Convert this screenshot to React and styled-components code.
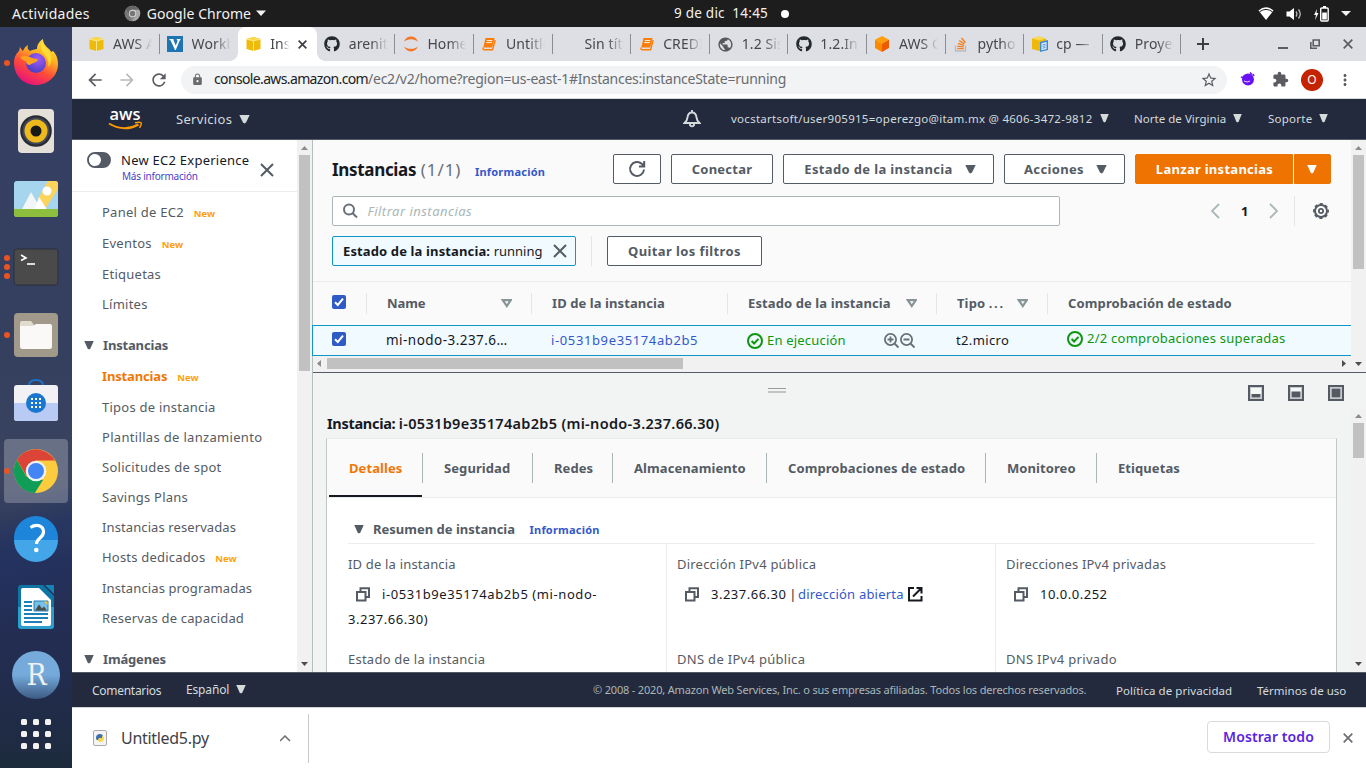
import React from "react";
import styled, { createGlobalStyle, css } from "styled-components";
import { MdArrowBack, MdArrowForward, MdRefresh, MdLock, MdStarBorder, MdExtension, MdPublic, MdMoreVert } from "react-icons/md";
import { FaGithub } from "react-icons/fa";

const Global = createGlobalStyle`
  * { box-sizing: border-box; }
  body { margin: 0; overflow: hidden; background: #fff; font-family: "Noto Sans", "Open Sans", sans-serif; }
  svg { display: block; flex: none; }
`;

const ORANGE = "#f07706";
const BLUE = "#3457cb";
const GREEN = "#0f960f";

const Txt = styled.span`
  font-size: ${(p) => p.$s || 13}px;
  font-weight: ${(p) => p.$b || 400};
  color: ${(p) => p.$c || "inherit"};
  letter-spacing: ${(p) => p.$ls || 0}px;
  margin-left: ${(p) => p.$ml || 0}px;
  margin-top: ${(p) => p.$mt || 0}px;
  white-space: nowrap;
  line-height: 1.2;
`;

const Screen = styled.div`
  width: 1366px;
  height: 768px;
  display: flex;
  flex-direction: column;
  overflow: hidden;
`;

/* ---------- GNOME top bar ---------- */
const TopBar = styled.header`
  height: 27px;
  background: #1d1d1d;
  color: #f2f2f2;
  display: grid;
  grid-template-columns: 674px 1fr auto;
  align-items: center;
`;
const TopGroup = styled.div`
  display: flex;
  align-items: center;
  padding-left: ${(p) => p.$pl || 0}px;
  padding-right: ${(p) => p.$pr || 0}px;
  gap: ${(p) => p.$gap || 0}px;
`;
const Dot = styled.i`
  width: ${(p) => p.$d || 8}px;
  height: ${(p) => p.$d || 8}px;
  border-radius: 50%;
  background: ${(p) => p.$c || "#fff"};
`;
const Body = styled.div`
  flex: 1;
  display: flex;
  min-height: 0;
`;

/* ---------- Dock ---------- */
const DockBar = styled.nav`
  width: 72px;
  padding-top: 2px;
  background:
    linear-gradient(152deg, transparent 63%, rgba(32, 52, 100, 0.55) 68%, transparent 78%),
    linear-gradient(180deg, #353f64 0%, #35405f 45%, #3a4460 62%, #26305a 72%, #222c4e 88%, #1d2b3d 100%);
  display: flex;
  flex-direction: column;
`;
const DockCell = styled.div`
  height: 68px;
  padding: 2px 4px;
`;
const DockInner = styled.div`
  height: 64px;
  border-radius: 4px;
  display: flex;
  align-items: center;
  background: ${(p) => (p.$on ? "rgba(255,255,255,.24)" : "transparent")};
`;
const Marks = styled.div`
  width: 8px;
  display: flex;
  flex-direction: column;
  gap: 3px;
`;
const GridCell = styled.div`
  height: 58px;
  padding: 9px 0 0 20px;
`;

/* ---------- Chrome ---------- */
const Browser = styled.main`
  width: 1294px;
  display: flex;
  flex-direction: column;
`;
const TabStrip = styled.div`
  height: 34px;
  background: #dedfe4;
  padding-left: 9px;
  display: flex;
  color: #45474b;
`;
const flare = css`
  &::before {
    content: "";
    position: absolute;
    left: -8px;
    right: -8px;
    bottom: 0;
    height: 8px;
    background:
      radial-gradient(circle at 0 0, transparent 7.5px, #fff 8px) left / 8px 8px no-repeat,
      radial-gradient(circle at 100% 0, transparent 7.5px, #fff 8px) right / 8px 8px no-repeat;
  }
`;
const TabBox = styled.div`
  width: 78.6px;
  flex: none;
  height: 34px;
  padding-left: 7.5px;
  display: flex;
  align-items: center;
  position: relative;
  background: ${(p) => (p.$active ? "#fff" : "transparent")};
  border-radius: 8px 8px 0 0;
  ${(p) => p.$active && flare}
  &::after {
    content: "";
    position: absolute;
    right: 0;
    top: 7px;
    width: 1px;
    height: 20px;
    background: ${(p) => (p.$line ? "#8a8c91" : "transparent")};
  }
`;
const TabIcon = styled.div`
  width: 24.5px;
  display: flex;
`;
const TabLabel = styled.div`
  width: ${(p) => p.$w || 40}px;
  overflow: hidden;
  font-size: 14px;
  line-height: 20px;
  white-space: nowrap;
  letter-spacing: 0.1px;
  mask-image: linear-gradient(90deg, #000 55%, transparent 98%);
`;
const WindowButtons = styled.div`
  display: flex;
  align-items: center;
  color: #5b5d62;
  margin-left: ${(p) => (p.$first ? "16px" : "auto")};
  padding-right: ${(p) => (p.$first ? 0 : 13)}px;
`;
const Toolbar = styled.div`
  height: 38px;
  background: #fff;
  border-bottom: 1px solid #d5dbdb;
  display: flex;
  align-items: center;
  padding-left: 12.5px;
`;
const NavButton = styled.div`
  width: 32px;
  display: flex;
  color: ${(p) => p.$c || "#5a5c61"};
`;
const Omnibox = styled.div`
  width: 1046px;
  height: 28px;
  border-radius: 14px;
  background: #f1f3f4;
  display: flex;
  align-items: center;
  padding: 0 9px 0 10.5px;
  color: #6a6c70;
`;
const Grow = styled.div`
  flex: 1;
`;
const Extensions = styled.div`
  display: flex;
  align-items: center;
  padding-left: 13px;
  color: #5a5c61;
`;
const Avatar = styled.div`
  width: 22px;
  height: 22px;
  margin: 0 12.5px 0 12.5px;
  border-radius: 50%;
  background: #c52200;
  color: #fff;
  font-size: 12px;
  display: grid;
  place-items: center;
`;

/* ---------- AWS header/footer ---------- */
const AwsHeader = styled.div`
  height: 41px;
  background: #232a3e;
  border-bottom: 1px solid #545b64;
  color: #d5dbdb;
  display: flex;
  align-items: center;
  padding-left: 36px;
`;
const HeadItem = styled.div`
  width: ${(p) => p.$w}px;
  flex: none;
  display: flex;
  align-items: center;
  gap: ${(p) => p.$gap || 7}px;
`;
const Footer = styled.div`
  height: 36px;
  background: #232a3e;
  border-top: 1px solid #545b64;
  border-bottom: 1px solid #cfd3d8;
  color: #d5dbdb;
  display: flex;
  align-items: center;
  padding-left: 20px;
`;
const Downloads = styled.div`
  flex: 1;
  background: #fff;
  display: flex;
  align-items: center;
  padding: 0 13px 0 21px;
  color: #3f4144;
`;
const DownloadItem = styled.div`
  width: 216px;
  height: 49px;
  border-right: 1px solid #c8c8c8;
  display: flex;
  align-items: center;
`;
const ShowAll = styled.button`
  width: 123px;
  height: 32px;
  margin: 0 13px 2px auto;
  padding: 0 0 2px;
  background: #fff;
  border: 1px solid #d9dade;
  border-radius: 4px;
  color: #5a1fe0;
  font: 600 14px "Noto Sans", sans-serif;
  letter-spacing: 0.1px;
`;

/* ---------- Console ---------- */
const Console = styled.div`
  height: 532px;
  display: flex;
`;
const Side = styled.aside`
  width: 225px;
  background: #fff;
  color: #545b64;
  overflow: hidden;
`;
const SideTop = styled.div`
  height: 52px;
  border-bottom: 1px solid #eaeded;
  display: flex;
  align-items: flex-start;
  padding: 12px 0 0 15px;
  margin-bottom: 5px;
`;
const Toggle = styled.div`
  width: 24px;
  height: 16px;
  flex: none;
  border-radius: 8px;
  border: 2px solid #545b64;
  background: linear-gradient(90deg, #fff 0 6px, #545b64 6px);
  &::before {
    content: "";
    display: block;
    width: 12px;
    height: 12px;
    border-radius: 50%;
    background: #fff;
  }
`;
const SideTitle = styled.div`
  width: 152px;
  flex: none;
  padding-left: 10px;
  display: flex;
  flex-direction: column;
`;
const SideItem = styled.div`
  height: ${(p) => (p.$new ? 31 : 30)}px;
  padding-left: 30px;
  display: flex;
  align-items: center;
  gap: 10px;
`;
const SideHead = styled.div`
  height: 32px;
  margin-top: 10px;
  padding-left: 12px;
  display: flex;
  align-items: center;
  gap: 8px;
`;
const VScroll = styled.div`
  width: 15px;
  background: #f1f1f1;
  display: flex;
  flex-direction: column;
  align-items: center;
  justify-content: space-between;
  padding: ${(p) => p.$pt || 5}px 0 5px;
`;
const VThumb = styled.div`
  width: 11px;
  height: ${(p) => p.$h}px;
  margin-top: 3px;
  margin-bottom: auto;
  background: #c1c1c1;
`;
const Main = styled.section`
  flex: 1;
  border-left: 1px solid #b3bec0;
  display: flex;
  flex-direction: column;
  min-width: 0;
`;
const ListPane = styled.div`
  height: 233px;
  background: #fafafa;
  border-bottom: 1px solid #545b64;
  display: flex;
`;
const ListBody = styled.div`
  width: 1038px;
`;
const Row = styled.div`
  height: ${(p) => p.$h}px;
  display: flex;
  align-items: center;
  padding-left: 19px;
`;
const ListTop = styled.div`
  height: 142px;
  padding-top: 14px;
  border-bottom: 1px solid #eaeded;
`;
const Button = styled.button`
  width: ${(p) => p.$w}px;
  height: 30px;
  margin-right: ${(p) => (p.$mr === undefined ? 10 : p.$mr)}px;
  padding: 0;
  background: #fff;
  border: 1px solid #545b64;
  border-radius: 2px;
  color: #545b64;
  display: flex;
  align-items: center;
  justify-content: center;
  gap: 12px;
  font-family: inherit;
`;
const Primary = styled(Button)`
  background: #ee7300;
  border-color: #ee7300;
  border-radius: ${(p) => (p.$end ? "0 2px 2px 0" : "2px 0 0 2px")};
  color: #fff;
`;
const Search = styled.div`
  width: 728px;
  height: 30px;
  background: #fff;
  border: 1px solid #aab7b8;
  border-radius: 2px;
  display: flex;
  align-items: center;
  padding-left: 10px;
  font-style: italic;
`;
const Pager = styled.div`
  width: 85px;
  height: 30px;
  margin-left: 150px;
  border-right: 1px solid #e3e7e7;
  display: flex;
  align-items: center;
  color: #aab7b8;
`;
const Tag = styled.div`
  width: 244px;
  height: 30px;
  background: #f1faff;
  border: 1px solid #0f97c7;
  border-radius: 2px;
  color: #16191f;
  display: flex;
  align-items: center;
  padding-left: 10px;
`;
const VLine = styled.i`
  width: 1px;
  height: 30px;
  background: #e3e7e7;
  margin: 0 15px;
`;
const Cells = styled.div`
  height: ${(p) => (p.$sel ? 31 : 43)}px;
  background: ${(p) => (p.$sel ? "#f1faff" : "transparent")};
  border: solid #0f97c7;
  border-width: ${(p) => (p.$sel ? "1px 0" : "0")};
  box-shadow: ${(p) => (p.$sel ? "-1px 0 #0f97c7" : "none")};
  color: ${(p) => (p.$sel ? "#16191f" : "#545b64")};
  display: grid;
  grid-template-columns: 54px 165px 196px 209px 111px 1fr;
  align-items: center;
`;
const Cell = styled.div`
  height: ${(p) => (p.$head ? 21 : 29)}px;
  border-right: 1px solid ${(p) => (p.$head && !p.$last ? "#e3e7e7" : "transparent")};
  padding-left: ${(p) => (p.$pl === undefined ? 20 : p.$pl)}px;
  display: flex;
  align-items: center;
`;
const SortSlot = styled.div`
  margin-left: auto;
  padding-right: ${(p) => p.$r || 19}px;
`;
const Checkbox = styled.div`
  width: 14px;
  height: 14px;
  border-radius: 2px;
  background: #2f5bc4;
  display: grid;
  place-items: center;
  margin-top: ${(p) => p.$mt || 0}px;
`;
const HScroll = styled.div`
  height: 16px;
  background: #f1f1f1;
  display: flex;
  align-items: center;
  justify-content: space-between;
  padding: 0 4px 1px 3px;
`;
const HThumb = styled.div`
  width: 356px;
  height: 11px;
  margin: 0 auto 0 4px;
  background: #c1c1c1;
`;
const Detail = styled.div`
  flex: 1;
  min-height: 0;
  background: #f2f3f3;
  display: flex;
  flex-direction: column;
  overflow: hidden;
`;
const DetailTools = styled.div`
  height: 36px;
  display: flex;
  align-items: center;
  padding: 4px 22px 0 455px;
`;
const Handle = styled.div`
  width: 18px;
  height: 5px;
  margin: 0 462px 5px 0;
  border-top: 1px solid #979b9b;
  border-bottom: 2px solid #c0c4c4;
`;
const DetailScroll = styled.div`
  flex: 1;
  display: flex;
  min-height: 0;
`;
const DetailBody = styled.div`
  width: 1038px;
  padding-left: 13px;
  overflow: hidden;
`;
const TitleRow = styled.div`
  height: 29px;
  color: #16191f;
  display: flex;
  align-items: center;
`;
const Card = styled.div`
  width: 1011px;
  height: 300px;
  background: #fff;
  border: 1px solid #c0c5c6;
  border-top-color: #eaeded;
`;
const Tabs = styled.div`
  height: 59px;
  background: #fafafa;
  border-bottom: 1px solid #eaeded;
  display: flex;
  padding-left: 2px;
`;
const DTab = styled.div`
  width: ${(p) => p.$w}px;
  height: 58px;
  display: flex;
  align-items: center;
  position: relative;
  padding-left: ${(p) => (p.$on ? 20 : 22)}px;
  border-bottom: 2px solid ${(p) => (p.$on ? "#16191f" : "transparent")};
  color: ${(p) => (p.$on ? ORANGE : "#545b64")};
  &::after {
    content: "";
    position: absolute;
    right: -1px;
    top: 14px;
    width: 1px;
    height: 30px;
    background: ${(p) => (p.$last ? "transparent" : "#aab7b8")};
  }
`;
const Section = styled.div`
  margin: 0 21px;
  padding-top: 17px;
`;
const SectionHead = styled.div`
  height: 29px;
  padding-left: 6px;
  border-bottom: 1px solid #eaeded;
  display: flex;
  align-items: center;
  color: #545b64;
`;
const Columns = styled.div`
  display: grid;
  grid-template-columns: 319px 329px 1fr;
`;
const Column = styled.div`
  height: 240px;
  padding: 11px 10px 0 ${(p) => (p.$first ? 0 : 10)}px;
  border-right: 1px solid ${(p) => (p.$last ? "transparent" : "#eaeded")};
`;
const Label = styled.div`
  height: 20px;
  color: #545b64;
  display: flex;
  align-items: center;
`;
const Value = styled.div`
  height: 25px;
  margin-top: ${(p) => (p.$next ? 0 : 7)}px;
  margin-bottom: ${(p) => p.$mb || 0}px;
  padding-left: ${(p) => (p.$next ? 0 : 8)}px;
  color: #16191f;
  display: flex;
  align-items: center;
`;
const Pair = styled.div`
  display: flex;
`;

/* ---------- glyphs ---------- */
const Tri = ({ c = "currentColor", w = 11, h = 9 }) => (
  <svg width={w} height={h} viewBox="0 0 11 9" preserveAspectRatio="none"><path d="M.3 0h10.400L7 7.500 5.500 8.500 4 7.500z" fill={c} /></svg>
);
const Sort = () => (
  <svg width="11" height="9" viewBox="0 0 11 9"><path d="M1.800 1.100h8L5.800 7z" fill="none" stroke="#879596" strokeWidth="2.200" /></svg>
);
const Cross = ({ s = 14, w = 2, c = "#545b64" }) => (
  <svg width={s} height={s} viewBox="0 0 14 14"><path d="M1 1l12 12M13 1L1 13" stroke={c} strokeWidth={w} fill="none" /></svg>
);
const Arrow = ({ d, c = "#4d4d4d" }) => (
  <svg width="7" height="7" viewBox="0 0 7 7">
    <path fill={c} d={{ up: "M0 5h7L3.5 1z", down: "M0 2h7L3.5 6z", left: "M5 0v7L1 3.5z", right: "M2 0v7l4-3.5z" }[d]} />
  </svg>
);
const CheckMark = () => (
  <svg width="12" height="12" viewBox="0 0 12 12"><path d="M2 6.2l2.8 2.8L10 2.6" stroke="#fff" strokeWidth="2" fill="none" /></svg>
);
const Ok = () => (
  <svg width="16" height="16" viewBox="0 0 16 16" fill="none" stroke={GREEN} strokeWidth="2">
    <circle cx="8" cy="8" r="7" /><path d="M4.6 8l2.5 2.5 4.4-4.6" />
  </svg>
);
const Mag = ({ plus }) => (
  <svg width="16" height="16" viewBox="0 0 16 16" fill="none" stroke="#687078" strokeWidth="1.8">
    <circle cx="6.500" cy="6.500" r="5.600" /><path d={plus ? "M3.500 6.500h6M6.500 3.500v6M10.500 10.500l4 4" : "M3.500 6.500h6M10.500 10.500l4 4"} />
  </svg>
);
const MagPair = () => <Pair><Mag plus /><Mag /></Pair>;
const Copy = () => (
  <svg width="15" height="15" viewBox="0 0 15 15" fill="none" stroke="#545b64" strokeWidth="2">
    <path d="M1 5h8.500v8.500H1zM4.500 5V1.200H13V10H9.500" />
  </svg>
);
const Chevron = ({ dir }) => (
  <svg width="10" height="16" viewBox="0 0 10 16"><path d={dir === "l" ? "M9 1L2 8l7 7" : "M1 1l7 7-7 7"} fill="none" stroke="#aab7b8" strokeWidth="1.8" /></svg>
);
const PanelIcon = ({ top, left = 3.5 }) => (
  <svg width="16" height="16" viewBox="0 0 16 16">
    <rect x="1" y="1" width="14" height="14" fill="#f6f7f7" stroke="#545b64" strokeWidth="2" />
    <rect x="2.5" y="2.5" width="11" height="11" fill="none" stroke="#c8cbce" />
    <rect x={left} y={top} width={16 - left * 2} height={12.5 - top} fill="#545b64" />
  </svg>
);
const Gear = () => (
  <svg width="16" height="16" viewBox="0 0 16 16" fill="none" stroke="#545b64">
    <circle cx="8" cy="8" r="6" strokeWidth="2" />
    <circle cx="8" cy="8" r="7.1" strokeWidth="1.7" strokeDasharray="3.2 2.380" strokeDashoffset="1.600" />
    <circle cx="8" cy="8" r="2.1" strokeWidth="1.8" />
  </svg>
);

const CubeYellow = () => (
  <svg width="16" height="16" viewBox="0 0 16 16">
    <path d="M.5 3l7-2 7 2v10l-7 2-7-2z" fill="#eebb0a" /><path d="M.5 3l7-2 7 2-7 1.600z" fill="#f9d94a" />
    <path d="M.5 3.200l7 1.600 7-1.600M7.500 5v10" stroke="#fff3b5" strokeWidth=".8" fill="none" />
  </svg>
);
const VIcon = () => (
  <svg width="16" height="16" viewBox="0 0 16 16"><path fill="#1f74b4" d="M0 0h16v16H0z" /><path d="M2.500 3h4v1L8.700 9.500l2-4.700-.9-.9V3h3.700v1l-.8.4L8.800 14H8L3.500 4.300 2.500 4z" fill="#fff" /></svg>
);
const Jupyter = () => (
  <svg width="16" height="16" viewBox="0 0 16 16" fill="#f37726"><path d="M1 5.800C2.200 2.400 4.800.6 8 .6s5.800 1.800 7 5.200C13.200 4 10.800 3.200 8 3.200S2.800 4 1 5.800zM1 10.200C2.200 13.600 4.800 15.400 8 15.400s5.800-1.800 7-5.200c-1.800 1.800-4.200 2.600-7 2.600s-5.200-.8-7-2.600z" /></svg>
);
const Book = () => (
  <svg width="16" height="16" viewBox="0 0 16 16">
    <path d="M4.500 2H13.600L11.200 11.500H2.300z" fill="#fb7d08" /><path d="M5.800 4.500h5.500M5.300 6.600h5.500" stroke="#fff" strokeWidth=".9" />
    <path d="M2.300 11.500c-.8 1.300-.3 2.200.7 2.200h8.600L14.200 4" stroke="#fb7d08" strokeWidth="1.400" fill="none" />
  </svg>
);
const CubeOrange = () => (
  <svg width="16" height="16" viewBox="0 0 16 16"><path d="M8 0l7 3.800L8 7.700 1 3.800z" fill="#ff9d0a" /><path d="M1 3.800l7 3.900V16l-7-4z" fill="#f98a00" /><path d="M15 3.800L8 7.700V16l7-4z" fill="#ee5a00" /></svg>
);
const Stack = () => (
  <svg width="16" height="16" viewBox="0 0 16 16" fill="none">
    <path d="M2.500 9.500V15h10V9.500" stroke="#bcbbbb" strokeWidth="1.400" />
    <path d="M4.300 12.600h6.500M4.400 10.200l6.400.7M4.900 7.400l6 2M6.200 4.600l5.200 3.300M8.500 2l4 4.700" stroke="#f48024" strokeWidth="1.400" />
  </svg>
);
const CubeDoc = () => (
  <svg width="17" height="16" viewBox="0 0 17 16">
    <path d="M0 2.500l7-2 7 2V13l-7 2-7-2z" fill="#efb90c" /><path d="M0 2.500l7-2 7 2-7 2z" fill="#fada50" />
    <path d="M8 6l8-2v10l-8 2z" fill="#3a8ad6" /><path d="M9.500 7.200l5-1.200v7l-5 1.200z" fill="#e8f3fd" /><path d="M10.500 8.800l3-.7M10.500 10.500l3-.7M10.500 12.200l3-.7" stroke="#3a8ad6" strokeWidth=".9" />
  </svg>
);

const TABS = [
  { t: "AWS A", i: <CubeYellow />, line: 1 },
  { t: "Workb", i: <VIcon /> },
  { t: "Ins", i: <CubeYellow />, active: 1 },
  { t: "arenita", i: <FaGithub size={16} color="#24292e" />, line: 1 },
  { t: "Home", i: <Jupyter />, line: 1 },
  { t: "Untitle", i: <Book />, line: 1 },
  { t: "Sin títu", i: null, line: 1 },
  { t: "CREDI", i: <Book />, line: 1 },
  { t: "1.2 Sist", i: <MdPublic size={17} color="#55585d" />, line: 1 },
  { t: "1.2.Intr", i: <FaGithub size={16} color="#24292e" />, line: 1 },
  { t: "AWS C", i: <CubeOrange />, line: 1 },
  { t: "python", i: <Stack />, line: 1 },
  { t: "cp — A", i: <CubeDoc />, line: 1 },
  { t: "Proyec", i: <FaGithub size={16} color="#24292e" />, line: 1 },
];

/* ---------- dock drawings ---------- */
const D = ({ children }) => <svg width="48" height="48" viewBox="0 0 48 48">{children}</svg>;
const Firefox = () => (
  <D>
    <defs>
      <linearGradient id="ffo" x1=".8" y1="0" x2=".3" y2="1"><stop offset="0" stopColor="#fff04a" /><stop offset=".35" stopColor="#ffb01f" /><stop offset=".65" stopColor="#ff4a3a" /><stop offset="1" stopColor="#e5107e" /></linearGradient>
      <radialGradient id="ffp" cx=".6" cy=".3" r=".7"><stop offset="0" stopColor="#a25cf5" /><stop offset="1" stopColor="#4b3fc4" /></radialGradient>
    </defs>
    <path d="M24 46C11 46 2 36 2 24c0-6 2-9 5-12l1-4c1 2 2 3 3 4 1-3 3-5 5-6-1 3 0 5 2 6 2-1 5-2 7-2 0-5 3-8 6-10 0 5 3 7 6 10 1 1 2 2 2 3l2-1c4 4 5 9 5 13 0 12-10 21-22 21z" fill="url(#ffo)" />
    <circle cx="24" cy="24" r="10" fill="url(#ffp)" />
    <path d="M8 18c4-2 9-1 12 1 2 1 5 0 6 2-2 3-6 3-8 5-2 0-4-1-4-4-2 0-5-2-6-4z" fill="#ffa01e" />
    <path d="M31 2c-3 5-2 10 2 14 3 3 4 8 3 12 5-5 4-13 0-17-3-3-5-5-5-9z" fill="#ffe23c" opacity=".8" />
  </D>
);
const Rhythm = () => (
  <D>
    <rect x="6" y="2" width="36" height="44" rx="4" fill="#e4e0d8" /><circle cx="24" cy="24" r="15.800" fill="#2b2b33" /><circle cx="24" cy="24" r="13.500" fill="#41485a" />
    <circle cx="24" cy="24" r="11.500" fill="#eeb91c" /><circle cx="24" cy="24" r="5.500" fill="#191919" />
  </D>
);
const Photos = () => (
  <D>
    <clipPath id="ph"><rect x="2" y="6" width="44" height="36" rx="3" /></clipPath>
    <g clipPath="url(#ph)">
      <path d="M2 6h44v36H2z" fill="#a6d6ee" /><path d="M36 6h10v8L33 34 26 24z" fill="#fcd45c" /><path d="M8 38L19 17l12 21z" fill="#f3f5f6" />
      <path d="M22 36l5-14 9 14z" fill="#fff" /><circle cx="35" cy="16" r="4.500" fill="#fff" /><path d="M2 34h44v8H2z" fill="#8ebe3d" />
    </g>
  </D>
);
const Terminal = () => (
  <D>
    <rect x="2" y="6" width="44" height="36" rx="3" fill="#4a4a4a" stroke="#2c2f3b" />
    <path d="M9 12l5 3-5 2.500" stroke="#fff" strokeWidth="1.600" fill="none" /><path d="M15 21h8" stroke="#fff" strokeWidth="1.600" />
  </D>
);
const Files = () => (
  <D><rect x="2" y="2" width="44" height="44" rx="4" fill="#a19a8b" /><path d="M8 12q0-2 2-2h9l3 4h4v5H8z" fill="#e0dccf" /><path d="M8 15h13l3-2h14q2 0 2 2v20.500q0 2.500-2.500 2.500h-27Q8 38 8 35.500z" fill="#faf9f7" /></D>
);
const Software = () => (
  <D>
    <path d="M17 7c0-4 3-6 7-6s7 2 7 6" stroke="#1a73c9" strokeWidth="2" fill="none" />
    <rect x="2" y="6" width="44" height="36" rx="3" fill="#f2f1f4" /><path d="M2 24h44v15q0 3-3 3H5q-3 0-3-3z" fill="#b9cbf5" />
    <circle cx="24" cy="24" r="10" fill="#1b76cf" />
    {[20, 24, 28].map((x) => [20, 24, 28].map((y) => <rect key={x + "-" + y} x={x - 1} y={y - 1} width="2" height="2" fill="#fff" />))}
  </D>
);
const Chrome = ({ s = 48, mono }) => (
  <svg width={s} height={s} viewBox="0 0 48 48">
    <circle cx="24" cy="24" r="22" fill={mono ? "#a8a8a8" : "#fdcb3e"} />
    <path d="M4.900 13A22 22 0 0 1 43 13.600H24L14.500 29z" fill={mono ? "#666" : "#db4437"} />
    <path d="M4.900 13l9.500 16.500L24 34.500 22.800 46A22 22 0 0 1 4.900 13z" fill={mono ? "#777" : "#0f9d58"} />
    <path d="M14.500 29.500L22.800 46 31 33z" fill={mono ? "#888" : "#0f9d58"} />
    <circle cx="24" cy="24" r="10.300" fill={mono ? "#ddd" : "#f3f3f3"} /><circle cx="24" cy="24" r="8" fill={mono ? "#777" : "#4285f4"} />
  </svg>
);
const Help = () => (
  <D>
    <circle cx="24" cy="23" r="22" fill="#1d86db" /><path d="M2 25a22 22 0 0 0 44 0z" fill="#43a6e8" />
    <path d="M18.500 12.500c6-4 13-2 13 4.500 0 6-7 6-7 12" stroke="#fff" strokeWidth="3.200" fill="none" /><circle cx="24.300" cy="35" r="2.300" fill="#fff" />
  </D>
);
const Writer = () => (
  <D>
    <path d="M6 5q0-3 3-3h22l11 11v30q0 3-3 3H9q-3 0-3-3z" fill="#0f75a5" /><path d="M6 24h36v19q0 3-3 3H9q-3 0-3-3z" fill="#2a9fce" />
    <path d="M9 7q0-2 2-2h16l12 12v24q0 2-2 2H11q-2 0-2-2z" fill="#fff" /><path d="M33 2h9v9z" fill="#1483b5" />
    <path d="M12 19h8M12 23h8M12 27h8M12 31h24M12 35h24M12 39h18" stroke="#1a80b5" strokeWidth="1.800" />
    <path d="M22 18h14v10H22z" fill="#77bfe5" stroke="#1a80b5" /><path d="M23 27.500l4-6 3 4 2-2 3 4z" fill="#4a4a4a" /><path d="M32 18.500h3.500V22z" fill="#f6c437" />
  </D>
);
const RStudio = () => (
  <D>
    <defs><linearGradient id="rs" x1="0" y1="0" x2="0" y2="1"><stop offset=".5" stopColor="#75aadb" /><stop offset="1" stopColor="#3c5a84" /></linearGradient></defs>
    <circle cx="24" cy="24" r="24" fill="url(#rs)" />
    <text x="24.500" y="34" textAnchor="middle" fontFamily="DejaVu Serif, serif" fontSize="29" fill="#f1f1f1" textLength="20" lengthAdjust="spacingAndGlyphs">R</text>
  </D>
);
const DOCK = [
  [Firefox, 1], [Rhythm, 0], [Photos, 0], [Terminal, 3], [Files, 1], [Software, 0], [Chrome, 1, true], [Help, 0], [Writer, 0], [RStudio, 0],
];

const Dock = () => (
  <DockBar>
    {DOCK.map(([Icon, n, on], k) => (
      <DockCell key={k}>
        <DockInner $on={on}>
          <Marks>{Array.from({ length: n }, (_, j) => <Dot key={j} $d={6} $c="#e95420" />)}</Marks>
          <Icon />
        </DockInner>
      </DockCell>
    ))}
    <GridCell>
      <svg width="32" height="32" viewBox="0 0 32 32" fill="#f2f2f2">
        {[1, 13, 25].map((x) => [1, 13, 25].map((y) => <rect key={x + "-" + y} x={x} y={y} width="6" height="6" rx="1.500" />))}
      </svg>
    </GridCell>
  </DockBar>
);

const SIDE = [
  { t: "Panel de EC2", ls: 0.25, isNew: 1 },
  { t: "Eventos", ls: 0.25, isNew: 1 },
  { t: "Etiquetas", ls: 0.25 },
  { t: "Límites", ls: 0.25 },
  { head: "Instancias" },
  { t: "Instancias", ls: -0.15, isNew: 1, active: 1 },
  { t: "Tipos de instancia", ls: 0.24 },
  { t: "Plantillas de lanzamiento", ls: 0.32 },
  { t: "Solicitudes de spot", ls: 0.27 },
  { t: "Savings Plans", ls: 0.25 },
  { t: "Instancias reservadas", ls: 0.1 },
  { t: "Hosts dedicados", ls: 0.2, isNew: 1 },
  { t: "Instancias programadas", ls: 0.12 },
  { t: "Reservas de capacidad", ls: 0.18 },
  { head: "Imágenes" },
];

const Sidebar = () => (
  <Side>
    <SideTop>
      <Toggle />
      <SideTitle>
        <Txt $s={13} $c="#16191f" $ls={0.25} $mt={1}>New EC2 Experience</Txt>
        <Txt $s={10} $c="#4a41c8" $mt={1} $ml={1} $ls={-0.22}>Más información</Txt>
      </SideTitle>
      <Txt $ml={-3} $mt={11}><Cross /></Txt>
    </SideTop>
    {SIDE.map((it, k) =>
      it.head ? (
        <SideHead key={k}><Tri w={10} /><Txt $b={700} $mt={2} $ml={1} $ls={-0.17}>{it.head}</Txt></SideHead>
      ) : (
        <SideItem key={k} $new={it.isNew}>
          <Txt $b={it.active ? 700 : 400} $c={it.active ? ORANGE : undefined} $ls={it.ls} $mt={it.isNew ? 0 : 2}>{it.t}</Txt>
          {it.isNew ? <Txt $s={9.5} $b={700} $c="#ff9f0a" $mt={2}>New</Txt> : null}
        </SideItem>
      )
    )}
  </Side>
);

const List = () => (
  <ListPane>
    <ListBody>
      <ListTop>
        <Row $h={30}>
          <Txt $s={17} $b={700} $c="#16191f" $ls={-0.32} $mt={2}>Instancias</Txt>
          <Txt $s={17} $c="#687078" $ml={4.5} $ls={0.95} $mt={2}>(1/1)</Txt>
          <Txt $s={11} $b={700} $c={BLUE} $ml={13.5} $mt={6} $ls={0.22}>Información</Txt>
          <Grow />
          <Button $w={48}>
            <svg width="18" height="18" viewBox="0 0 18 18" fill="none" stroke="#545b64" strokeWidth="2"><path d="M16 9.500a7 7 0 1 1-2.200-5.700L16 6.200M16.200 1v5.500H11" /></svg>
          </Button>
          <Button $w={102}><Txt $b={700} $ls={0.25} $mt={2}>Conectar</Txt></Button>
          <Button $w={211}><Txt $b={700} $ls={0.36} $ml={3} $mt={2}>Estado de la instancia</Txt><Tri /></Button>
          <Button $w={121}><Txt $b={700} $ls={0.35} $ml={2} $mt={2}>Acciones</Txt><Tri /></Button>
          <Primary $w={158} $mr={1}><Txt $b={700} $ls={0.28} $ml={1} $mt={2}>Lanzar instancias</Txt></Primary>
          <Primary $w={37} $mr={20} $end><Txt $ml={-1}><Tri w={10} /></Txt></Primary>
        </Row>
        <Row $h={54}>
          <Search>
            <svg width="16" height="16" viewBox="0 0 16 16" fill="none" stroke="#687078" strokeWidth="2"><circle cx="6" cy="6.500" r="5" /><path d="M9.700 10.300L14 14.500" /></svg>
            <Txt $ml={8.5} $c="#aab7b8" $ls={0.48} $mt={2}>Filtrar instancias</Txt>
          </Search>
          <Pager>
            <Chevron dir="l" /><Txt $b={700} $c="#16191f" $ml={21} $mt={1}>1</Txt><Txt $ml={21}><Chevron dir="r" /></Txt>
          </Pager>
          <Txt $ml={18}><Gear /></Txt>
        </Row>
        <Row $h={26}>
          <Tag>
            <Txt $b={700} $ls={0.13} $mt={1}>Estado de la instancia:</Txt><Txt $ml={3.5} $mt={1}>running</Txt><Txt $ml={11}><Cross /></Txt>
          </Tag>
          <VLine />
          <Button $w={155}><Txt $b={700} $ls={0.4} $mt={2}>Quitar los filtros</Txt></Button>
        </Row>
      </ListTop>
      <Cells>
        <Cell $head $pl={19}><Checkbox $mt={-3}><CheckMark /></Checkbox></Cell>
        <Cell $head><Txt $b={700} $ls={-0.1}>Name</Txt><SortSlot><Sort /></SortSlot></Cell>
        <Cell $head><Txt $b={700} $ls={0.08}>ID de la instancia</Txt></Cell>
        <Cell $head><Txt $b={700} $ls={0.1}>Estado de la instancia</Txt><SortSlot><Sort /></SortSlot></Cell>
        <Cell $head><Txt $b={700} $ls={0.12}>Tipo <Txt $b={700} $ls={1.7}>...</Txt></Txt><SortSlot><Sort /></SortSlot></Cell>
        <Cell $head $last><Txt $b={700} $ls={0.13}>Comprobación de estado</Txt></Cell>
      </Cells>
      <Cells $sel>
        <Cell $pl={19}><Checkbox $mt={-3}><CheckMark /></Checkbox></Cell>
        <Cell $pl={19}><Txt $s={13.5} $ls={0.46}>mi-nodo-3.237.6…</Txt></Cell>
        <Cell $pl={19}><Txt $c={BLUE} $ls={0.62}>i-0531b9e35174ab2b5</Txt></Cell>
        <Cell $pl={19}><Ok /><Txt $ml={4} $c={GREEN} $ls={0.2}>En ejecución</Txt><SortSlot $r={20}><MagPair /></SortSlot></Cell>
        <Cell $pl={19}><Txt $ls={0.36}>t2.micro</Txt></Cell>
        <Cell $pl={19}><Txt $mt={-4}><Ok /></Txt><Txt $ml={4} $mt={-4} $c={GREEN} $ls={0.25}>2/2 comprobaciones superadas</Txt></Cell>
      </Cells>
      <HScroll><Arrow d="left" c="#8c8c8c" /><HThumb /><Arrow d="right" /></HScroll>
    </ListBody>
    <VScroll><Arrow d="up" c="#8c8c8c" /><VThumb $h={114} /><Arrow d="down" /></VScroll>
  </ListPane>
);

const DETAIL_TABS = [["Detalles", 93], ["Seguridad", 110], ["Redes", 80], ["Almacenamiento", 154], ["Comprobaciones de estado", 219], ["Monitoreo", 111], ["Etiquetas", 120]];

const DetailPane = () => (
  <Detail>
    <DetailTools>
      <Handle />
      <PanelIcon top={9} /><Txt $ml={24}><PanelIcon top={6.500} /></Txt><Txt $ml={24}><PanelIcon top={3.500} /></Txt>
    </DetailTools>
    <DetailScroll>
      <DetailBody>
        <TitleRow><Txt $s={14.500} $b={600} $ml={1} $mt={1} $ls={0.32}><Txt $s={14.500} $b={700} $ls={-0.3}>Instancia: </Txt>i-0531b9e35174ab2b5 (mi-nodo-3.237.66.30)</Txt></TitleRow>
        <Card>
          <Tabs>
            {DETAIL_TABS.map(([t, w], k) => <DTab key={t} $w={w} $on={k === 0} $last={k === 6}><Txt $b={700} $ls={0.08} $mt={4}>{t}</Txt></DTab>)}
          </Tabs>
          <Section>
            <SectionHead><Tri w={10} /><Txt $b={700} $ml={9} $mt={2}>Resumen de instancia</Txt><Txt $s={11} $b={700} $c={BLUE} $ml={14.5} $mt={1} $ls={0.22}>Información</Txt></SectionHead>
            <Columns>
              <Column $first>
                <Label><Txt $ls={0.18}>ID de la instancia</Txt></Label>
                <Value><Copy /><Txt $ml={11} $ls={0.58}>i-0531b9e35174ab2b5 (mi-nodo-</Txt></Value>
                <Value $next $mb={18}><Txt $ls={0.52}>3.237.66.30)</Txt></Value>
                <Label><Txt $ls={0.24}>Estado de la instancia</Txt></Label>
              </Column>
              <Column>
                <Label><Txt $ls={0.22}>Dirección IPv4 pública</Txt></Label>
                <Value $mb={43}>
                  <Copy /><Txt $ml={11} $ls={0.5}>3.237.66.30<Txt $ls={-0.5}> |</Txt></Txt><Txt $ml={2} $c={BLUE} $ls={0.2}>dirección abierta</Txt>
                  <Txt $ml={4}><svg width="15" height="15" viewBox="0 0 15 15" fill="none" stroke="#16191f" strokeWidth="2"><path d="M6 1H1v12.500h12.500V9M8.500 1h5v5.500M13.500 1L5 9.500" /></svg></Txt>
                </Value>
                <Label><Txt $ls={0.3}>DNS de IPv4 pública</Txt></Label>
              </Column>
              <Column $last>
                <Label><Txt $ls={0.17}>Direcciones IPv4 privadas</Txt></Label>
                <Value $mb={43}><Copy /><Txt $ml={11} $ls={0.5}>10.0.0.252</Txt></Value>
                <Label><Txt $ls={0.3}>DNS IPv4 privado</Txt></Label>
              </Column>
            </Columns>
          </Section>
        </Card>
      </DetailBody>
      <VScroll $pt={4}><Arrow d="up" c="#8c8c8c" /><VThumb $h={35} /><Arrow d="down" /></VScroll>
    </DetailScroll>
  </Detail>
);

export default function App() {
  return (
    <Screen>
      <Global />
      <TopBar>
        <TopGroup $pl={12}>
          <Txt $s={14} $ls={0.27} $mt={1}>Actividades</Txt>
          <Txt $ml={34.5}><Chrome s={17} mono /></Txt>
          <Txt $s={14} $ml={5.500} $ls={0.08} $mt={1}>Google Chrome</Txt>
          <Txt $ml={5}><svg width="10" height="6" viewBox="0 0 10 6"><path d="M0 .5h10L5 6z" fill="#f2f2f2" /></svg></Txt>
        </TopGroup>
        <TopGroup $gap={13}><Txt $s={13.500} $ls={0.24}>9 de dic&nbsp; 14:45</Txt><Dot /></TopGroup>
        <TopGroup $pr={15} $gap={12}>
          <svg width="16" height="13" viewBox="0 0 16 13"><path d="M.5 3.500Q8-3 15.500 3.500L8 13z" fill="#fff" /><path d="M1.500 4.800Q8 0 14.500 4.800" stroke="#1d1d1d" strokeWidth="1" fill="none" /></svg>
          <svg width="16" height="14" viewBox="0 0 16 14"><path d="M.5 4.500h3L8 1v12L3.500 9.500h-3z" fill="#fff" /><path d="M10 4.500q1.800 2.500 0 5M12.500 2.500q3.500 4.500 0 9" stroke="#bbb" strokeWidth="1.300" fill="none" /></svg>
          <svg width="15" height="16" viewBox="0 0 15 16"><path d="M3 3L0 9h2l-1 5 3.500-7h-2z" fill="#fff" /><rect x="6.700" y="2" width="7.500" height="13" rx="1" fill="none" stroke="#fff" strokeWidth="1.400" /><path d="M9 0h3v2H9zM8.200 6.500h4.600v7H8.200z" fill="#fff" /></svg>
          <svg width="10" height="6" viewBox="0 0 10 6"><path d="M0 0h10L5 5z" fill="#f2f2f2" /></svg>
        </TopGroup>
      </TopBar>
      <Body>
        <Dock />
        <Browser>
          <TabStrip>
            {TABS.map((t, k) => (
              <TabBox key={k} $active={t.active} $line={t.line}>
                <TabIcon>{t.i}</TabIcon>
                <TabLabel $w={t.active ? 20 : 40}>{t.t}</TabLabel>
                {t.active ? <Txt $ml={8}><Cross s={9} w={2.600} c="#3c3e42" /></Txt> : null}
              </TabBox>
            ))}
            <WindowButtons $first>
              <svg width="12" height="12" viewBox="0 0 12 12"><path d="M6 0v12M0 6h12" stroke="#3c3e42" strokeWidth="2" /></svg>
            </WindowButtons>
            <WindowButtons>
              <svg width="10" height="10" viewBox="0 0 10 10"><path d="M0 9h10" stroke="currentColor" strokeWidth="2" /></svg>
              <Txt $ml={22}><svg width="10" height="10" viewBox="0 0 10 10" fill="none" stroke="currentColor" strokeWidth="1.600"><path d="M3.200 1h6v5.800h-6zM.8 3v6.200h6.200" /></svg></Txt>
              <Txt $ml={23}><Cross s={10} w={2.400} c="#5b5d62" /></Txt>
            </WindowButtons>
          </TabStrip>
          <Toolbar>
            <NavButton><MdArrowBack size={20} /></NavButton>
            <NavButton $c="#b9babd"><MdArrowForward size={20} /></NavButton>
            <NavButton><MdRefresh size={20} /></NavButton>
            <Omnibox>
              <MdLock size={13} />
              <Txt $s={14} $ml={10} $c="#202124" $ls={-0.64}>console.aws.amazon.com</Txt>
              <Txt $s={14} $ls={-0.25}>/ec2/v2/home?region=us-east-1#Instances:instanceState=running</Txt>
              <Grow />
              <MdStarBorder size={18} color="#5a5c61" />
            </Omnibox>
            <Extensions>
              <svg width="16" height="16" viewBox="0 0 16 16"><circle cx="8" cy="7.500" r="6" fill="#6a11f5" /><path d="M1 5l3 1M10 .5l2 2M13 2l1 2" stroke="#6a11f5" strokeWidth="1.500" /><path d="M4 9l3 1 3-1" stroke="#fff" fill="none" strokeWidth=".8" /></svg>
              <Txt $ml={16}><MdExtension size={17} /></Txt>
              <Avatar>O</Avatar>
              <MdMoreVert size={18} />
            </Extensions>
          </Toolbar>
          <AwsHeader>
            <HeadItem $w={68}>
              <svg width="34" height="24" viewBox="0 0 34 24">
                <text x="17" y="13" textAnchor="middle" fontFamily="Open Sans, sans-serif" fontWeight="600" fontSize="17" textLength="31" lengthAdjust="spacingAndGlyphs" fill="#fff">aws</text>
                <path d="M1 16.500Q16 25.500 30.500 17.500" stroke="#ff9900" strokeWidth="2" fill="none" /><path d="M27 15.800q5-1 6 0t-1.500 5" stroke="#ff9900" strokeWidth="1.500" fill="none" />
              </svg>
            </HeadItem>
            <HeadItem $w={507}><Txt $ls={0.3} $mt={1}>Servicios</Txt><Tri /></HeadItem>
            <HeadItem $w={48}>
              <svg width="18" height="18" viewBox="0 0 18 18" fill="none" stroke="#d5dbdb" strokeWidth="1.900"><path d="M9 0v3M9 2.500c-3 0-4.200 2.200-4.500 4.800C4.200 10 3.500 11.500 1.500 13h15c-2-1.500-2.700-3-3-5.700C13.200 4.700 12 2.500 9 2.500zM7 13.200v2q2 2.400 4 0v-2" /></svg>
            </HeadItem>
            <HeadItem $w={403}><Txt $s={11.500} $ls={0.27}>vocstartsoft/user905915=operezgo@itam.mx @ 4606-3472-9812</Txt><Tri w={9} /></HeadItem>
            <HeadItem $w={134}><Txt $s={11.500} $ls={0.03}>Norte de Virginia</Txt><Tri w={9} /></HeadItem>
            <HeadItem $w={70}><Txt $s={11.500} $ls={0.25}>Soporte</Txt><Tri w={9} /></HeadItem>
          </AwsHeader>
          <Console>
            <Sidebar />
            <VScroll><Arrow d="up" c="#8c8c8c" /><VThumb $h={216} /><Arrow d="down" /></VScroll>
            <Main>
              <List />
              <DetailPane />
            </Main>
          </Console>
          <Footer>
            <HeadItem $w={94}><Txt $s={12} $ls={-0.28} $mt={2}>Comentarios</Txt></HeadItem>
            <HeadItem $w={407}><Txt $s={12} $ls={-0.15}>Español</Txt><Tri w={10} /></HeadItem>
            <HeadItem $w={523}><Txt $s={11} $c="#aab7b8" $ls={-0.18}>© 2008 - 2020, Amazon Web Services, Inc. o sus empresas afiliadas. Todos los derechos reservados.</Txt></HeadItem>
            <HeadItem $w={141}><Txt $s={11.500} $ls={0.07} $mt={2}>Política de privacidad</Txt></HeadItem>
            <HeadItem $w={90}><Txt $s={11.500} $mt={2}>Términos de uso</Txt></HeadItem>
          </Footer>
          <Downloads>
            <DownloadItem>
              <svg width="14" height="16" viewBox="0 0 14 16"><rect x=".5" y=".5" width="13" height="15" rx="1.500" fill="#f4f4f4" stroke="#aaa" /><path d="M3 8q0-4 4-4 3 0 3 3v1H6v2H4q-1 0-1-2z" fill="#3f6fae" /><path d="M11 8q0 4-4 4-2 0-2-2 0-2 2-2h2V6q2 0 2 2z" fill="#f5d94c" /></svg>
              <Txt $s={16} $ml={14} $ls={-0.3} $mt={1}>Untitled5.py</Txt>
              <Grow />
              <Txt><svg width="28" height="7" viewBox="0 0 28 7"><path d="M0 6l5-5 5 5" fill="none" stroke="#6c6e72" strokeWidth="1.500" /></svg></Txt>
            </DownloadItem>
            <ShowAll>Mostrar todo</ShowAll>
            <Cross s={10} w={2.400} c="#6c6e72" />
          </Downloads>
        </Browser>
      </Body>
    </Screen>
  );
}
